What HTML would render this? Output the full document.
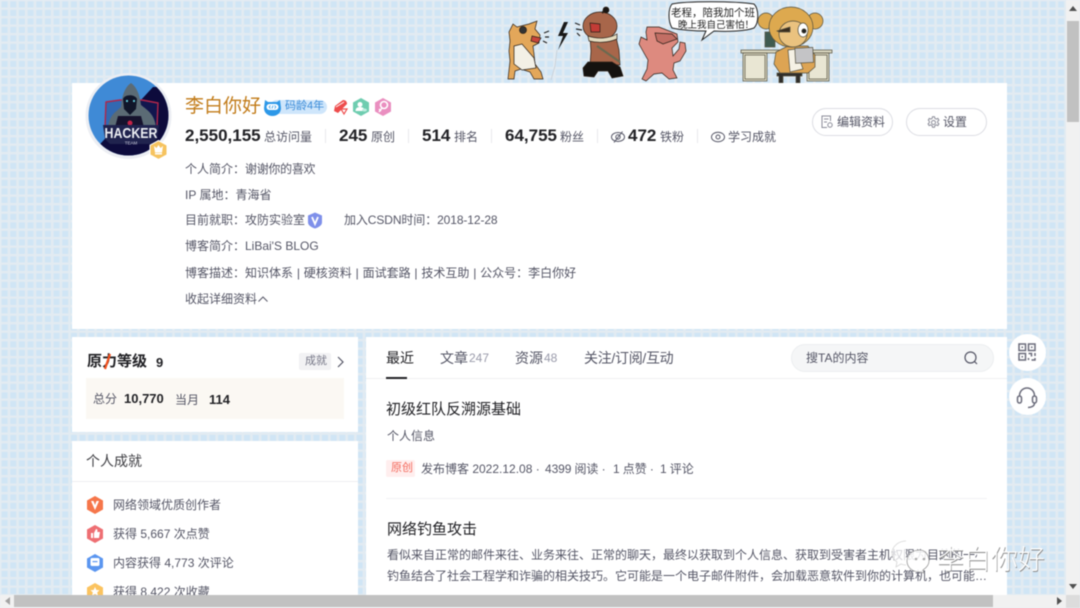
<!DOCTYPE html>
<html lang="zh-CN"><head><meta charset="utf-8"><title>李白你好</title>
<style>
html,body{margin:0;padding:0;width:1080px;height:608px;overflow:hidden;background:#e6eef5}
body{position:relative;font-family:"Liberation Sans","Noto Sans CJK SC",sans-serif;color:#555666}
#w{position:absolute;left:0;top:0;width:1080px;height:608px;overflow:hidden;filter:blur(.4px)}
.bg{position:absolute;left:0;top:0}
.c{position:absolute;background:#fff}
.t{position:absolute;white-space:nowrap;line-height:1;font-size:12px}
.b{font-weight:bold;color:#222226}
.d{position:absolute;width:1px;height:14px;background:#e8e8ed;top:129px}
svg{position:absolute;overflow:visible}
.btn{position:absolute;box-sizing:border-box;border:1px solid #dcdde3;border-radius:14px;height:28px;top:108px;background:#fff}
.round{position:absolute;width:37px;height:37px;border-radius:50%;background:#fff}
</style></head><body><div id="w">
<svg class="bg" width="1080" height="608"><defs><pattern id="p" width="8.66" height="8.5" patternUnits="userSpaceOnUse"><rect width="8.66" height="8.5" fill="#e2ebf2"/><rect x="1.6" y="1.4" width="6" height="6" fill="#d0e5f5"/></pattern></defs><rect width="1080" height="608" fill="url(#p)"/></svg>

<!-- banner -->
<svg width="360" height="84" style="left:480px;top:0">
<g stroke="#2a2018" stroke-width=".7">
<!-- dog -->
<path d="M33 24l4 3 12-3 8-3-2 8 5 6-1 8-6 3 1 8 1 10 6 8 2 7-9 0-4-7-9-3-6 2-1 8-6 0 1-9 1-9-1-10 1-10-1-9z" fill="#e3a75a"/>
<path d="M34 46l8-2 12 14 2 10-14 2-8-6z" fill="#f3f0e6"/><path d="M52 36l9 2-3 5-7-2z" fill="#c8453c"/>
<circle cx="43" cy="30" r="3.500" fill="#333"/>
<!-- man -->
<path d="M110 37h26l3 13 1 15h-30l1-14z" fill="#a8664a"/>
<ellipse cx="120" cy="26" rx="17" ry="14" fill="#a8664a"/>
<path d="M110 23l10 1 0 8-9 0z" fill="#c23c36"/>
<path d="M108 36c9 3 20 3 29-2l0 5c-9 4-20 4-28 2z" fill="#e4dcc0"/>
<path d="M108 62l24 0 8 5 3 9-11 2-4-7-10 0-4 6-10-1-1-8z" fill="#15120f"/>
<path d="M117 46l23 16" stroke-width="2" stroke="#6a6a50"/>
<path d="M122 13l3-3" stroke-width="2"/><circle cx="126" cy="10" r="3" fill="#1a1512"/>
<!-- pig -->
<path d="M167 27l12 0 18 7 1 8-6 6 1 8 6-7 1-7 5 1 1 8-6 10-6 2-1 7 4 8-8 1-7-6-8 1-8 7-4-2 5-10 1-9-4-7-5-9 2-7 6 3-1-8z" fill="#dd8a7f"/>
<path d="M175 33l17 1 5 5-14 5-6-3z" fill="#c26e64"/>
</g>
<path d="M84 22l-6 14 5 0-5 14 10-17-5 0 5-11z" fill="#181818"/>
<path d="M77 50l-2 16-4 14" stroke="#c8ced4" stroke-width=".8" fill="none"/>
<path d="M64 33l5-2M65 37l4 0M63 41l4 2M95 23l5 2M96 29l6 1M97 33l3 3" stroke="#222" stroke-width="1.200"/>
<path d="M192 4c14-3 62-3 82 0 5 5 5 19 0 24-8 3-26 4-40 3l-12 9 4-9c-10 0-26-1-34-3-4-7-4-19 0-24z" fill="#fff" stroke="#222" stroke-width="1"/>
<text x="191" y="16" font-size="10.500" fill="#222" font-family="WenQuanYi Zen Hei,Noto Sans CJK SC,sans-serif">老程，陪我加个班</text>
<text x="198" y="28" font-size="9.500" fill="#222" font-family="WenQuanYi Zen Hei,Noto Sans CJK SC,sans-serif">晚上我自己害怕！</text>
<g stroke="#54503f" stroke-width=".7">
<rect x="261" y="50" width="91" height="3" fill="#d9d6bf"/>
<rect x="263" y="53" width="24" height="28" fill="#dcd9c2"/><rect x="265" y="55" width="20" height="24" fill="#e9e6d3"/>
<rect x="327" y="53" width="22" height="28" fill="#dcd9c2"/><rect x="329" y="55" width="18" height="24" fill="#e9e6d3"/>
<rect x="285" y="32" width="10" height="15" fill="#3f5a50"/>
<path d="M297 73l25 0 0 3-2 0 0 7-4 0 0-7-13 0 0 7-4 0 0-7-2 0z" fill="#2f2d2a"/>
<path d="M296 52l12-6 20 0 7 9 0 12-7 6-28 0-6-9z" fill="#dda453"/>
<path d="M308 50l8-1 7 20-13 3z" fill="#f5f1e5"/>
<rect x="315" y="48" width="18" height="15" fill="#c4c4c6" transform="rotate(-3 320 52)"/>
<circle cx="286" cy="21" r="8" fill="#dda94f"/><circle cx="335" cy="21" r="8" fill="#dda94f"/>
<ellipse cx="311" cy="27" rx="22" ry="20" fill="#dda94f"/>
<ellipse cx="313" cy="34" rx="14" ry="13" fill="#eac27f"/>
<path d="M297 31l13-4 0 5-11 0z" fill="#3a2d1e"/><ellipse cx="323" cy="30" rx="5" ry="7" fill="#fff"/><circle cx="324" cy="31" r="2.200" fill="#222"/>
</g></svg>

<!-- profile card -->
<div class="c" style="left:72px;top:83px;width:935px;height:246px"></div>
<svg width="90" height="92" style="left:84px;top:72px">
<circle cx="44.500" cy="44" r="43" fill="#eceef3"/>
<clipPath id="ac"><circle cx="44.500" cy="43.500" r="40"/></clipPath>
<g clip-path="url(#ac)">
<rect x="0" y="0" width="90" height="90" fill="#3f8ad6"/>
<path d="M69 15L90 15 90 90 0 90 18 70z" fill="#0d0b3c"/>
<path d="M22 30l14-2 22 0 16 3-1 24-6 12-42 0-4-12z" fill="#1a2a70" fill-opacity=".35" stroke="#b2264a" stroke-width="1.400"/>
<path d="M24 56c1-13 8-16 13-21 1-12 4-20 10-24 6 4 9 13 10 22 6 5 14 9 15 23l-3 5H28z" fill="#5b6b75"/>
<path d="M39 27c2-5 12-5 14 0l-1 10-6 6-6-6z" fill="#10162a"/>
<circle cx="43" cy="29" r="1.100" fill="#62d0e0"/><circle cx="50" cy="29" r="1.100" fill="#62d0e0"/>
<path d="M34 44l23 0 4 15-31 0z" fill="#16132e"/>
<circle cx="46" cy="51" r="2.500" fill="#c32347"/>
<path d="M19 53h56l-2 14-6 5H26l-5-5z" fill="#20234e"/>
<text x="47" y="66" text-anchor="middle" font-size="15" font-weight="bold" fill="#eceef3" font-family="Liberation Sans,sans-serif" textLength="53" lengthAdjust="spacingAndGlyphs">HACKER</text>
<text x="47" y="72.500" text-anchor="middle" font-size="4.500" fill="#ccd" font-family="Liberation Sans,sans-serif">TEAM</text>
</g></svg>
<svg width="20" height="20" style="left:149px;top:140px"><path d="M9.500 .5l8.500 4.700v9.600l-8.500 4.700-8.500-4.700v-9.600z" fill="#f6c35f" stroke="#fff"/><path d="M5 6l2.500 2 2-3 2 3 2.500-2-1 6.500h-7z" fill="#fff"/><rect x="6" y="13" width="7" height="1.500" fill="#fff"/></svg>

<div class="t" style="left:185px;top:97px;font-size:19px;color:#c27c1a">李白你好</div>
<div style="position:absolute;left:270px;top:100px;width:57px;height:14px;border-radius:8px;background:#cfe6fb"></div>
<svg width="19" height="19" style="left:263px;top:98px"><path d="M2 2l3 2h9l3-2 1 8c0 5-4 8-8.500 8s-8.500-3-8.500-8z" fill="#2d98e8"/><rect x="3.500" y="6" width="12" height="6" rx="3" fill="#fff"/><path d="M6 9l1.500-1.500M6 9l1.500 1.500M13 9l-1.500-1.500M13 9l-1.500 1.500M10 7.500L9 10.500" stroke="#2d98e8" stroke-width=".8"/></svg>
<div class="t" style="left:285px;top:101px;font-size:11px;color:#3a8bd8">码龄4年</div>
<svg width="17" height="18" style="left:332px;top:98px"><path d="M3 8L11 2c3 0 4 2 4 4L6 15 2 13z" fill="#ee4c4c"/><path d="M4 9l8-5" stroke="#fff" stroke-width="1"/><path d="M9 11h6l-3 5z" fill="#fff" stroke="#ee4c4c" stroke-width="1.200"/></svg>
<svg width="18" height="18" style="left:352px;top:98px"><path d="M9 0l8 4.500v9l-8 4.500-8-4.500v-9z" fill="#6fcdb0"/><circle cx="8" cy="6.500" r="2.500" fill="#fff"/><path d="M3.500 13c0-3 2-4 4.500-4s4.500 1 4.500 4z" fill="#fff"/><ellipse cx="12.500" cy="12" rx="2.500" ry="1.500" fill="#bfeee0"/></svg>
<svg width="18" height="18" style="left:374px;top:98px"><path d="M9 0l8 4.500v9l-8 4.500-8-4.500v-9z" fill="#ea8fc0"/><circle cx="10" cy="7" r="3.500" fill="none" stroke="#fff" stroke-width="1.600"/><path d="M8 10l-3 4M5 11l2 2" stroke="#fff" stroke-width="1.400"/></svg>

<div class="t b" style="left:185px;top:127px;font-size:17px">2,550,155</div><div class="t" style="left:264px;top:131px">总访问量</div>
<div class="d" style="left:325px"></div>
<div class="t b" style="left:339px;top:127px;font-size:17px">245</div><div class="t" style="left:371px;top:131px">原创</div>
<div class="d" style="left:408px"></div>
<div class="t b" style="left:422px;top:127px;font-size:17px">514</div><div class="t" style="left:454px;top:131px">排名</div>
<div class="d" style="left:491px"></div>
<div class="t b" style="left:505px;top:127px;font-size:17px">64,755</div><div class="t" style="left:560px;top:131px">粉丝</div>
<div class="d" style="left:597px"></div>
<svg width="14" height="14" style="left:611px;top:130px" fill="none" stroke="#555666" stroke-width="1"><ellipse cx="7" cy="7" rx="6.500" ry="4.500"/><circle cx="7" cy="7" r="2.200"/><path d="M3 12.500L11.500 1.500"/></svg>
<div class="t b" style="left:628px;top:127px;font-size:17px">472</div><div class="t" style="left:660px;top:131px">铁粉</div>
<div class="d" style="left:697px"></div>
<svg width="14" height="14" style="left:711px;top:130px" fill="none" stroke="#555666" stroke-width="1"><ellipse cx="7" cy="7" rx="6.500" ry="4.800"/><circle cx="7" cy="7" r="2"/></svg>
<div class="t" style="left:728px;top:131px">学习成就</div>

<div class="btn" style="left:812px;width:81px"></div>
<svg width="12" height="14" style="left:821px;top:115px" fill="none" stroke="#8b8c98" stroke-width="1"><path d="M9.500 6V1H1v11.500h5"/><path d="M3 4h4.500M3 7h3"/><circle cx="9" cy="10" r="2.200"/></svg>
<div class="t" style="left:837px;top:116px;color:#555666">编辑资料</div>
<div class="btn" style="left:906px;width:81px"></div>
<svg width="13" height="13" style="left:927px;top:116px" fill="none" stroke="#8b8c98" stroke-width="1"><circle cx="6.500" cy="6.500" r="2"/><path d="M5.500 .8h2l.4 1.600 1.500.7 1.500-.7 1 1.700-1.200 1.100v1.600l1.200 1.100-1 1.700-1.500-.7-1.500.7-.4 1.600h-2l-.4-1.600-1.500-.7-1.500.7-1-1.700 1.200-1.100V5.200L1.300 4.100l1-1.700 1.500.7 1.300-.7z"/></svg>
<div class="t" style="left:943px;top:116px">设置</div>

<div class="t" style="left:185px;top:163px">个人简介：<span style="letter-spacing:-.3px">谢谢你的喜欢</span></div>
<div class="t" style="left:185px;top:189px">IP 属地：青海省</div>
<div class="t" style="left:185px;top:214px">目前就职：攻防实验室</div>
<svg width="16" height="17" style="left:307px;top:212px"><path d="M8 .5l7 3v7c0 3-4 5-7 6-3-1-7-3-7-6v-7z" fill="#7f90ea"/><path d="M5 5l3 7 3-7" fill="none" stroke="#fff" stroke-width="1.800"/></svg>
<div class="t" style="left:344px;top:214px;letter-spacing:-.1px">加入CSDN时间：2018-12-28</div>
<div class="t" style="left:185px;top:240px">博客简介：LiBai'S BLOG</div>
<div class="t" style="left:185px;top:267px;word-spacing:.5px">博客描述：知识体系 | 硬核资料 | 面试套路 | 技术互助 | 公众号：李白你好</div>
<div class="t" style="left:185px;top:293px">收起详细资料</div>
<svg width="10" height="6" style="left:258px;top:296px" fill="none" stroke="#555666"><path d="M.5 5.500L5 1l4.500 4.500"/></svg>

<!-- left cards -->
<div class="c" style="left:72px;top:337px;width:286px;height:95px"></div>
<div class="t" style="left:87px;top:354px;font-size:15px;font-weight:bold;color:#222226">原力等级</div>
<svg width="8" height="15" style="left:104px;top:354px"><path d="M6 0L1 15" stroke="#f4511e" stroke-width="2.200"/></svg>
<div class="t b" style="left:156px;top:356px;font-size:13px">9</div>
<div style="position:absolute;left:299px;top:353px;width:32px;height:17px;background:#f2f2f4;border-radius:2px"></div>
<div class="t" style="left:305px;top:356px;font-size:11px;color:#777888">成就</div>
<svg width="7" height="12" style="left:337px;top:356px" fill="none" stroke="#555666" stroke-width="1.200"><path d="M1 1l5 5-5 5"/></svg>
<div style="position:absolute;left:86px;top:378px;width:258px;height:41px;background:#fbf8f3"></div>
<div class="t" style="left:93px;top:393px">总分</div>
<div class="t b" style="left:124px;top:392px;font-size:13px">10,770</div>
<div class="t" style="left:175px;top:394px">当月</div>
<div class="t b" style="left:209px;top:393px;font-size:13px">114</div>

<div class="c" style="left:72px;top:441px;width:286px;height:154px;overflow:hidden">
<div style="position:absolute;left:0;top:40px;width:286px;height:1px;background:#eeeef2"></div>
<div class="t" style="left:14px;top:13px;font-size:14px;color:#404045">个人成就</div>
<svg width="16" height="18" style="left:15px;top:55px"><path d="M8 0l8 4.500v9l-8 4.500-8-4.500v-9z" fill="#f6764a"/><path d="M4 5l4 9 4-9-2.500 0-1.500 4-1.500-4z" fill="#fff"/></svg>
<div class="t" style="left:41px;top:58px">网络领域优质创作者</div>
<svg width="16" height="18" style="left:15px;top:84px"><path d="M8 0l8 4.500v9l-8 4.500-8-4.500v-9z" fill="#ee6f73"/><path d="M4 8h2v5H4zM7 8l2-4c1.500 0 1.500 1 1.300 3H13l-1 6H7z" fill="#fff"/></svg>
<div class="t" style="left:41px;top:87px">获得 5,667 次点赞</div>
<svg width="16" height="18" style="left:15px;top:113px"><path d="M8 0l8 4.500v9l-8 4.500-8-4.500v-9z" fill="#5b96f0"/><rect x="3.500" y="4" width="9" height="8" rx="1.500" fill="#fff"/><rect x="5.500" y="7" width="5" height="1.200" fill="#5b96f0"/></svg>
<div class="t" style="left:41px;top:116px">内容获得 4,773 次评论</div>
<svg width="16" height="18" style="left:15px;top:142px"><path d="M8 0l8 4.500v9l-8 4.500-8-4.500v-9z" fill="#fbc35f"/><path d="M8 4l1.400 3 3.100.3-2.300 2.100.7 3.100L8 11l-2.900 1.500.7-3.100-2.300-2.100 3.100-.3z" fill="#fff"/></svg>
<div class="t" style="left:41px;top:145px">获得 8,422 次收藏</div>
</div>

<!-- main -->
<div class="c" style="left:366px;top:337px;width:641px;height:258px;overflow:hidden">
<div style="position:absolute;left:0;top:41px;width:641px;height:1px;background:#f0f0f2"></div>
<div style="position:absolute;left:20px;top:40px;width:21px;height:2px;background:#222226"></div>
<div class="t" style="left:20px;top:14px;font-size:14px;color:#222226">最近</div>
<div class="t" style="left:74px;top:14px;font-size:14px">文章</div><div class="t" style="left:103px;top:15px;color:#999aaa">247</div>
<div class="t" style="left:149px;top:14px;font-size:14px">资源</div><div class="t" style="left:178px;top:15px;color:#999aaa">48</div>
<div class="t" style="left:218px;top:14px;font-size:14px;letter-spacing:-.3px">关注/订阅/互动</div>
<div style="position:absolute;box-sizing:border-box;left:425px;top:7px;width:203px;height:28px;border-radius:14px;background:#f5f6f7;border:1px solid #eceef0"></div>
<div class="t" style="left:440px;top:15px;color:#555666">搜TA的内容</div>
<svg width="14" height="14" style="left:598px;top:14px" fill="none" stroke="#555666" stroke-width="1.200"><circle cx="6.500" cy="6.500" r="5.500"/><path d="M10.500 10.500l2.500 2.500"/></svg>

<div class="t" style="left:20px;top:65px;font-size:15px;color:#222226">初级红队反溯源基础</div>
<div class="t" style="left:21px;top:93px">个人信息</div>
<div style="position:absolute;left:20px;top:123px;width:29px;height:17px;border-radius:2px;background:#ffeeee"></div>
<div class="t" style="left:25px;top:126px;font-size:11px;color:#f46a5c">原创</div>
<div class="t" style="left:55px;top:126px">发布博客 2022.12.08 ·</div>
<div class="t" style="left:179px;top:126px;letter-spacing:-.1px">4399 阅读 ·</div>
<div class="t" style="left:247px;top:126px;letter-spacing:-.1px">1 点赞 ·</div>
<div class="t" style="left:294px;top:126px;letter-spacing:-.1px">1 评论</div>
<div style="position:absolute;left:20px;top:161px;width:601px;height:1px;background:#f2f2f4"></div>
<div class="t" style="left:21px;top:185px;font-size:15px;color:#222226">网络钓鱼攻击</div>
<div class="t" style="left:21px;top:212px;width:590px;overflow:hidden">看似来自正常的邮件来往、业务来往、正常的聊天，最终以获取到个人信息、获取到受害者主机权限为目的的一种网络</div>
<div class="t" style="left:21px;top:233px">钓鱼结合了社会工程学和诈骗的相关技巧。它可能是一个电子邮件附件，会加载恶意软件到你的计算机，也可能…</div>
</div>

<!-- float -->
<div class="round" style="left:1009px;top:334px"></div>
<svg width="18" height="18" style="left:1018px;top:343px" fill="none" stroke="#6b6c7b" stroke-width="1.500"><rect x="1" y="1" width="6.500" height="6.500"/><rect x="10.500" y="1" width="6.500" height="6.500"/><rect x="1" y="10.500" width="6.500" height="6.500"/><path d="M10.500 10.500h3v3M17 10v3M10.500 17v-2M13.500 17h3.500v-2"/><path d="M3.500 3.500h1.500v1.500H3.500zM13 3.500h1.500v1.500H13zM3.500 13h1.500v1.500H3.500z" fill="#6b6c7b" stroke="none"/></svg>
<div class="round" style="left:1009px;top:378px"></div>
<svg width="22" height="22" style="left:1016px;top:386px" fill="none" stroke="#6b6c7b" stroke-width="1.500"><path d="M3.500 10C3.500 5 7 2 11 2s7.500 3 7.500 8"/><rect x="1.500" y="10" width="4" height="7" rx="2"/><rect x="16.500" y="10" width="4" height="7" rx="2"/><path d="M18.500 17c0 3-3 4.500-6.500 4.500"/></svg>

<!-- watermark -->
<svg width="160" height="50" style="left:890px;top:538px">
<path d="M16 3c-8 0-14 6-14 12 0 4 2 7 5 9l-1 5 5-3c2 1 3 1 5 1" fill="#fff" fill-opacity=".75" stroke="#d6d6d6" stroke-width=".8"/>
<path d="M30 12c-8 0-13 5-13 11s5 11 13 11l4 1-1-3c3-2 6-5 6-9 0-6-4-11-9-11z" fill="#fff" fill-opacity=".85" stroke="#999" stroke-width=".8"/>
<circle cx="26" cy="21" r="1.300" fill="#aaa"/><circle cx="34" cy="21" r="1.300" fill="#aaa"/>
<text x="47.600" y="32" font-size="27" fill="#8a8a8a" font-family="Noto Sans CJK SC,sans-serif" font-weight="300">李白你好</text>
<text x="47" y="31" font-size="27" fill="#fff" font-family="Noto Sans CJK SC,sans-serif" font-weight="300">李白你好</text>
</svg>

<!-- scrollbars -->
<div style="position:absolute;left:1066px;top:0;width:14px;height:608px;background:#f1f1f1"></div>
<div style="position:absolute;left:1067px;top:21px;width:12px;height:101px;background:#c1c1c1"></div>
<svg width="8" height="5" style="left:1069px;top:6px"><path d="M4 0l4 5H0z" fill="#505050"/></svg>
<svg width="8" height="5" style="left:1069px;top:584px"><path d="M0 0h8L4 5z" fill="#505050"/></svg>
<div style="position:absolute;left:0;top:595px;width:1066px;height:13px;background:#f1f1f1"></div>
<div style="position:absolute;left:14px;top:595px;width:979px;height:12px;background:#c1c1c1"></div>
<svg width="5" height="8" style="left:5px;top:597px"><path d="M5 0v8L0 4z" fill="#a3a3a3"/></svg>
<svg width="5" height="8" style="left:1057px;top:597px"><path d="M0 0v8l5-4z" fill="#505050"/></svg>
<div style="position:absolute;left:1066px;top:595px;width:14px;height:13px;background:#dcdcdc"></div>
</div></body></html>
